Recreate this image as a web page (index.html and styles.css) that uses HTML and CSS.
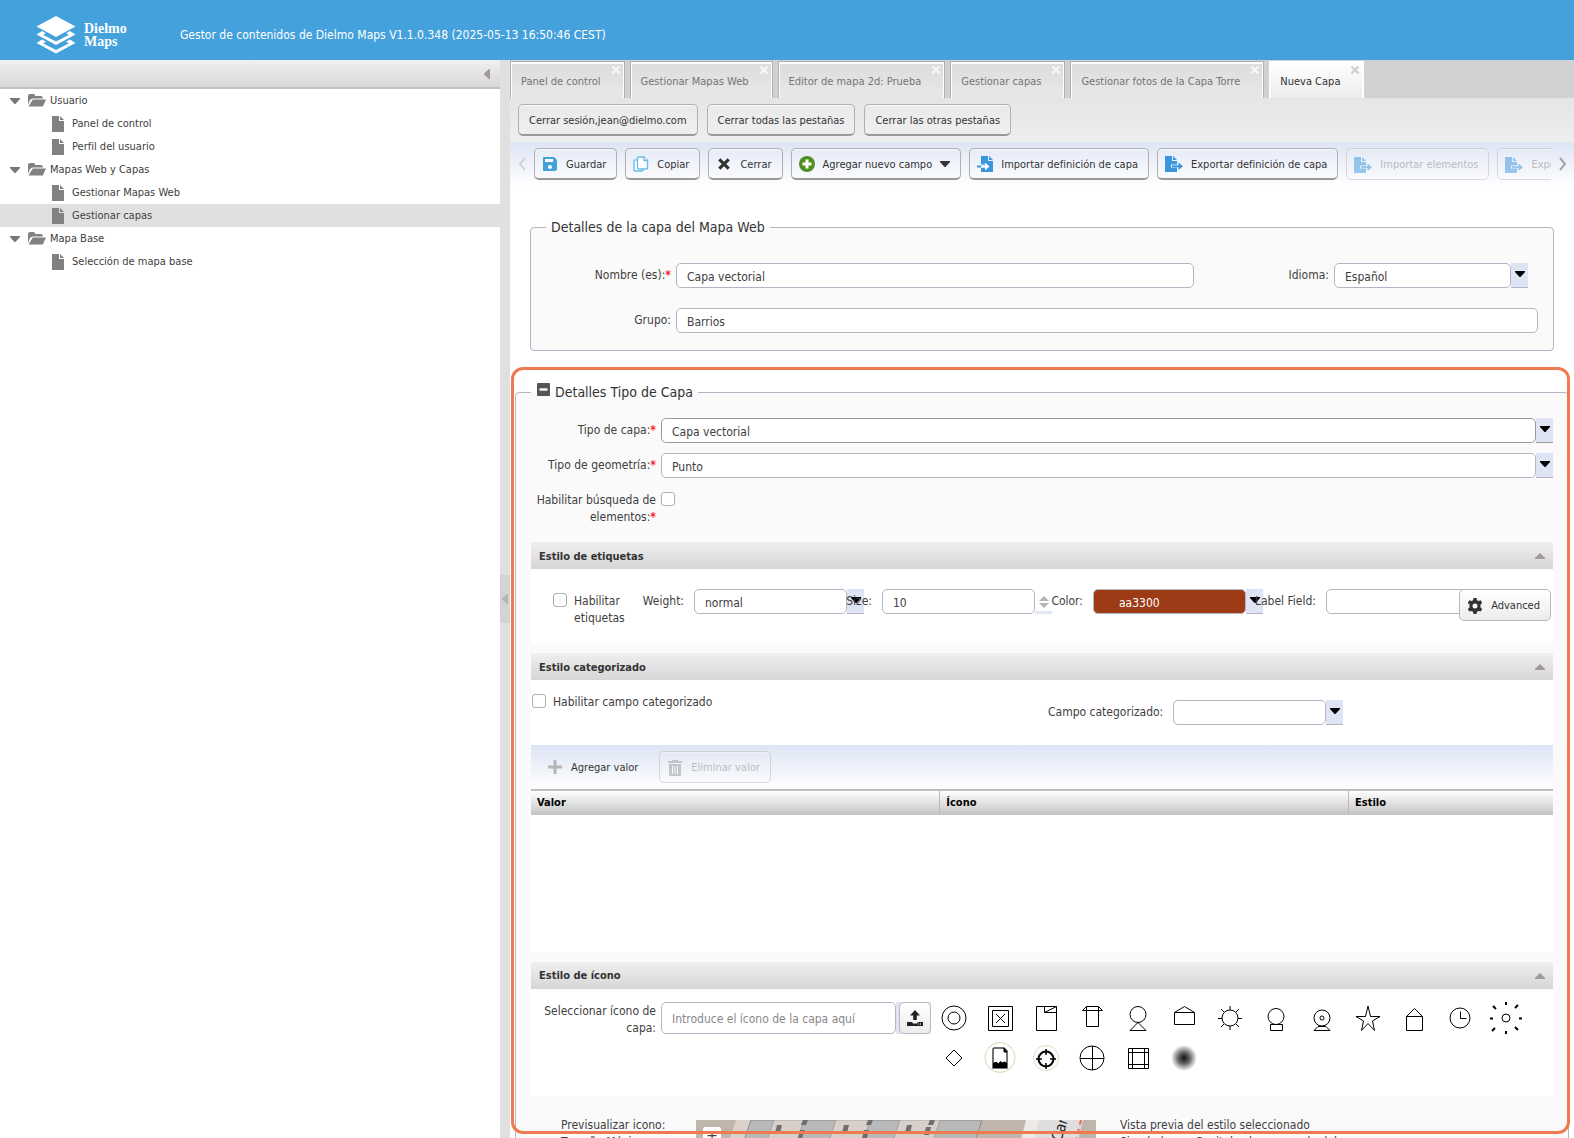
FILE: index.html
```html
<!DOCTYPE html>
<html lang="es">

<head>
    <meta charset="utf-8">
    <title>Dielmo Maps</title>
    <link rel="stylesheet" href="styles.css">
</head>

<body>
    <!-- shared shapes -->
    <svg class="defs" width="0" height="0" aria-hidden="true">
        <symbol id="folder" viewBox="0 0 18 13">
            <path d="M0 11V2q0-2 2-2h3.500q1.500 0 1.800 2H13q2 0 2 2.500H5q-2 0-3 1.500z" fill="#818181" />
            <path d="M4.800 5.500H18l-3.200 7H.5z" fill="#818181" />
        </symbol>
        <symbol id="page" viewBox="0 0 12 16">
            <path d="M0 0h7v5h5v11H0zM8 0l4 4H8z" fill="#818181" />
        </symbol>
        <symbol id="down" viewBox="0 0 10 6">
            <path d="M0 0h10v1L5.500 6h-1L0 1z" fill="currentColor" />
        </symbol>
        <symbol id="up" viewBox="0 0 10 6">
            <path d="M0 6h10V5L5 0 0 5z" fill="#a39999" />
        </symbol>
        <symbol id="cross" viewBox="0 0 10 10">
            <path d="M1.500 1.500l7 7M8.500 1.500l-7 7" stroke="currentColor" stroke-width="2.400" />
        </symbol>
        <symbol id="export" viewBox="0 0 18 16">
            <path d="M0 0h7v5h5v3.500H6v3h6V16H0zM8 0l4 4H8z" fill="#3c96dd" />
            <path d="M7 9.200h6.500V6.500L18 10.200l-4.500 3.700v-2.700H7z" fill="#3c96dd" />
        </symbol>
    </svg>

    <header class="header">
        <div class="logo">
            <svg width="40" height="38" viewBox="0 0 40 38">
                <path d="M20 0l19.500 10.500L20 21 .5 10.500z" fill="#fff" />
                <path d="M6 15L.5 18.500 20 29l19.500-10.500L34 15l-4 2.200 3 1.500L20 25.500 7 18.700l3-1.500z" fill="#fff" />
                <path d="M6 23.500L.5 27 20 37.500 39.500 27 34 23.500l-4 2.200 3 1.500L20 34 7 27.200l3-1.500z" fill="#fff" />
            </svg>
            <span>Dielmo<br>Maps</span>
        </div>
        <p class="version">Gestor de contenidos de Dielmo Maps V1.1.0.348 (2025-05-13 16:50:46 CEST)</p>
    </header>

    <div class="layout">
        <nav class="sidebar">
            <div class="sidebar-head">
                <svg width="6" height="10" viewBox="0 0 6 10"><path d="M6 0v10L5 10 0 5.500v-1L5 0z" fill="#a39999" /></svg>
            </div>
            <ul class="tree">
                <li class="folder"><svg class="caret" width="10" height="6"><use href="#down" /></svg><svg width="18" height="13"><use href="#folder" /></svg>Usuario</li>
                <li class="leaf"><svg width="12" height="16"><use href="#page" /></svg><a href="#">Panel de control</a></li>
                <li class="leaf"><svg width="12" height="16"><use href="#page" /></svg><a href="#">Perfil del usuario</a></li>
                <li class="folder"><svg class="caret" width="10" height="6"><use href="#down" /></svg><svg width="18" height="13"><use href="#folder" /></svg>Mapas Web y Capas</li>
                <li class="leaf"><svg width="12" height="16"><use href="#page" /></svg><a href="#">Gestionar Mapas Web</a></li>
                <li class="leaf selected"><svg width="12" height="16"><use href="#page" /></svg><a href="#">Gestionar capas</a></li>
                <li class="folder"><svg class="caret" width="10" height="6"><use href="#down" /></svg><svg width="18" height="13"><use href="#folder" /></svg>Mapa Base</li>
                <li class="leaf"><svg width="12" height="16"><use href="#page" /></svg><a href="#">Selección de mapa base</a></li>
            </ul>
        </nav>

        <div class="splitter">
            <div class="handle"><svg width="6" height="10" viewBox="0 0 6 10"><path d="M6 0v10L5 10 0 5.500v-1L5 0z" fill="#b5b5b5" /></svg></div>
        </div>

        <main class="main">
            <div class="tabs">
                <button class="tab">Panel de control<svg class="close" width="10" height="10"><use href="#cross" /></svg></button>
                <button class="tab">Gestionar Mapas Web<svg class="close" width="10" height="10"><use href="#cross" /></svg></button>
                <button class="tab">Editor de mapa 2d: Prueba<svg class="close" width="10" height="10"><use href="#cross" /></svg></button>
                <button class="tab">Gestionar capas<svg class="close" width="10" height="10"><use href="#cross" /></svg></button>
                <button class="tab">Gestionar fotos de la Capa Torre<svg class="close" width="10" height="10"><use href="#cross" /></svg></button>
                <button class="tab active">Nueva Capa<svg class="close" width="10" height="10"><use href="#cross" /></svg></button>
            </div>

            <div class="session">
                <button class="btn">Cerrar sesión,jean@dielmo.com</button>
                <button class="btn">Cerrar todas las pestañas</button>
                <button class="btn">Cerrar las otras pestañas</button>
            </div>

            <div class="toolbar">
                <svg class="scroll" width="8" height="14" viewBox="0 0 8 14"><path d="M7 1L2 7l5 6" fill="none" stroke="#d3d3d3" stroke-width="2" /></svg>
                <div class="tools">
                    <button class="btn icon">
                        <svg width="16" height="16" viewBox="0 0 16 16"><path d="M2 1h10l3 3v9q0 2-2 2H2q-1 0-1-1V2q0-1 1-1z" fill="#44a1db" /><path d="M3 3h8v3H3z" fill="#fff" /><circle cx="8" cy="11" r="2" fill="#fff" /></svg>
                        Guardar</button>
                    <button class="btn icon">
                        <svg width="16" height="16" viewBox="0 0 16 16" fill="#fff" stroke="#6cbce8" stroke-width="1.400"><path d="M3.500 4H2Q1 4 1 5v9q0 1 1 1h7q1 0 1-1v-1" /><path d="M5.500 1H11l3.500 3.500V12q0 1-1 1h-8q-1 0-1-1V2q0-1 1-1z" /><path d="M11 1v3.500h3.500" /></svg>
                        Copiar</button>
                    <button class="btn icon"><svg width="16" height="16" viewBox="-1 -1 12 12"><use href="#cross" width="10" height="10" /></svg>Cerrar</button>
                    <button class="btn icon">
                        <svg width="16" height="16" viewBox="0 0 16 16"><circle cx="8" cy="8" r="8" fill="#4f8f22" /><path d="M8 3.500v9M3.500 8h9" stroke="#fff" stroke-width="3" /></svg>
                        Agregar nuevo campo
                        <svg class="menu" width="10" height="6"><use href="#down" /></svg></button>
                    <button class="btn icon">
                        <svg width="16" height="16" viewBox="0 0 16 16"><path d="M4 0h7v5h5v11H4v-4h4v2.500l4.500-4L8 6.500v2H4zM12 0l4 4h-4z" fill="#3c96dd" /><path d="M0 9.500h9v2H0z" fill="#3c96dd" /><path d="M4 9.500h4.500V7.500l3.500 3-3.500 3v-2H4z" fill="#fff" /></svg>
                        Importar definición de capa</button>
                    <button class="btn icon"><svg width="18" height="16"><use href="#export" /></svg>Exportar definición de capa</button>
                    <button class="btn icon" disabled><svg width="18" height="16"><use href="#export" /></svg>Importar elementos</button>
                    <button class="btn icon" disabled><svg width="18" height="16"><use href="#export" /></svg>Exportar elementos</button>
                </div>
                <svg class="scroll" width="8" height="14" viewBox="0 0 8 14"><path d="M1 1l5 6-5 6" fill="none" stroke="#a5a5a5" stroke-width="2" /></svg>
            </div>

            <form class="content">
                <fieldset class="box map-box">
                    <legend>Detalles de la capa del Mapa Web</legend>
                    <div class="row">
                        <label class="label wide" for="nombre">Nombre (es):<b>*</b></label>
                        <input class="field nombre" id="nombre" type="text" value="Capa vectorial">
                        <label class="label idioma" for="idioma">Idioma:</label>
                        <span class="combo idioma-combo">
                            <select class="field" id="idioma"><option>Español</option></select>
                            <span class="trigger"><svg width="10" height="6"><use href="#down" /></svg></span>
                        </span>
                    </div>
                    <div class="row">
                        <label class="label wide" for="grupo">Grupo:</label>
                        <input class="field grow" id="grupo" type="text" value="Barrios">
                    </div>
                </fieldset>

                <fieldset class="box type-box">
                    <legend><svg width="13" height="13" viewBox="0 0 13 13"><rect width="13" height="13" rx="1" fill="#555" /><path d="M2.500 6.500h8" stroke="#fff" stroke-width="2.400" /></svg>Detalles Tipo de Capa</legend>
                    <div class="row">
                        <label class="label" for="tipo">Tipo de capa:<b>*</b></label>
                        <span class="combo grow focus">
                            <select class="field" id="tipo"><option>Capa vectorial</option></select>
                            <span class="trigger"><svg width="10" height="6"><use href="#down" /></svg></span>
                        </span>
                    </div>
                    <div class="row">
                        <label class="label" for="geometria">Tipo de geometría:<b>*</b></label>
                        <span class="combo grow">
                            <select class="field" id="geometria"><option>Punto</option></select>
                            <span class="trigger"><svg width="10" height="6"><use href="#down" /></svg></span>
                        </span>
                    </div>
                    <div class="row search-row">
                        <label class="label" for="busqueda">Habilitar búsqueda de elementos:<b>*</b></label>
                        <input class="check" id="busqueda" type="checkbox">
                    </div>

                    <section class="panel">
                        <h2>Estilo de etiquetas<svg width="10" height="6"><use href="#up" /></svg></h2>
                        <div class="tag-style">
                            <div class="tag-check">
                                <input class="check" id="etiquetas" type="checkbox">
                                <label for="etiquetas">Habilitar etiquetas</label>
                            </div>
                            <div class="cell weight-cell">
                                <label for="weight">Weight:</label>
                                <span class="combo over">
                                    <select class="field" id="weight"><option>normal</option></select>
                                    <span class="trigger"><svg width="10" height="6"><use href="#down" /></svg></span>
                                </span>
                            </div>
                            <div class="cell size-cell">
                                <label for="size">Size:</label>
                                <span class="combo over">
                                    <input class="field" id="size" type="text" value="10">
                                    <span class="trigger spin"><svg width="10" height="12" viewBox="0 0 10 12"><path d="M5 0l5 5H0zM5 12l5-5H0z" fill="#b4b4b4" /></svg></span>
                                </span>
                            </div>
                            <div class="cell color-cell">
                                <label for="color">Color:</label>
                                <span class="combo over">
                                    <input class="field color" id="color" type="text" value="aa3300">
                                    <span class="trigger"><svg width="10" height="6"><use href="#down" /></svg></span>
                                </span>
                            </div>
                            <div class="cell field-cell">
                                <label for="labelfield">Label Field:</label>
                                <input class="field" id="labelfield" type="text">
                            </div>
                            <button class="btn icon advanced" type="button">
                                <svg width="16" height="16" viewBox="0 0 16 16"><path fill-rule="evenodd" d="M6.500 0h3l.5 2.200 1.500.8 2.200-.7 1.500 2.600-1.700 1.600v2.900l1.700 1.600-1.500 2.600-2.200-.7-1.500.8-.5 2.300h-3L6 13.700l-1.500-.8-2.200.7L.8 11l1.700-1.600V6.500L.8 4.900l1.500-2.600 2.200.7L6 2.200zM8 5.500a2.500 2.500 0 1 0 0 5 2.500 2.500 0 0 0 0-5z" fill="#333" /></svg>
                                Advanced</button>
                        </div>
                    </section>

                    <section class="panel">
                        <h2>Estilo categorizado<svg width="10" height="6"><use href="#up" /></svg></h2>
                        <div class="category">
                            <div class="category-check">
                                <input class="check" id="categorizado" type="checkbox">
                                <label for="categorizado">Habilitar campo categorizado</label>
                            </div>
                            <div class="cell category-field">
                                <label for="campo">Campo categorizado:</label>
                                <span class="combo">
                                    <select class="field" id="campo"><option></option></select>
                                    <span class="trigger"><svg width="10" height="6"><use href="#down" /></svg></span>
                                </span>
                            </div>
                        </div>
                        <div class="values-bar">
                            <button class="btn icon flat" type="button"><svg width="16" height="16" viewBox="0 0 16 16"><path d="M8 1v14M1 8h14" stroke="#b5b5b5" stroke-width="3" /></svg>Agregar valor</button>
                            <button class="btn icon" type="button" disabled><svg width="16" height="16" viewBox="0 0 16 16"><path d="M1 1h4V0h6v1h4v2H1zM2 4h12v12H2z" fill="#999" /><path d="M5.500 6v8M8 6v8M10.500 6v8" stroke="#fff" /></svg>Eliminar valor</button>
                        </div>
                        <table class="values">
                            <thead>
                                <tr><th>Valor</th><th>Ícono</th><th>Estilo</th></tr>
                            </thead>
                            <tbody>
                                <tr><td colspan="3"></td></tr>
                            </tbody>
                        </table>
                    </section>

                    <section class="panel">
                        <h2>Estilo de ícono<svg width="10" height="6"><use href="#up" /></svg></h2>
                        <div class="icon-style">
                            <label class="label" for="icono">Seleccionar ícono de capa:</label>
                            <input class="field tall" id="icono" type="text" placeholder="Introduce el ícono de la capa aquí">
                            <span class="upload">
                                <button class="btn" type="button" aria-label="Subir"><svg width="16" height="16" viewBox="0 0 16 16"><path d="M8 0l5 5.500H9.800V10H6.200V5.500H3zM0 12h5l1 1.500h4L11 12h5v4H0z" fill="#222" /><path d="M11 14h1M13 14h1" stroke="#fff" /></svg></button>
                            </span>
                            <div class="icons">
                                <svg viewBox="0 0 32 32"><circle cx="16" cy="16" r="12" /><circle cx="16" cy="16" r="6" /></svg>
                                <svg viewBox="0 0 32 32"><path d="M4.500 4.500h24v24h-24zM8.500 8.500h16v16h-16zM12 12l9 9M21 12l-9 9" /></svg>
                                <svg viewBox="0 0 32 32"><path d="M6.500 4.500h20v24h-20zM14.500 4.500v6h12M14.500 10.500l12-6" /></svg>
                                <svg viewBox="0 0 32 32"><path d="M10.500 4.500h12v20h-12zM10.500 4.500l-4 4h20l-4-4" /></svg>
                                <svg viewBox="0 0 32 32"><circle cx="16" cy="12.500" r="8" /><path d="M16 20.500l-8 8h16z" /></svg>
                                <svg viewBox="0 0 32 32"><path d="M6.500 10.500h20v12h-20zM6.500 10.500l10-6 10 6" /></svg>
                                <svg viewBox="0 0 32 32"><circle cx="16" cy="16" r="8" /><path d="M16 4v4M16 24v4M4 16.500h4M24 16.500h4M7 7l3 3M25 7l-3 3M7 25l3-3M25 25l-3-3" /></svg>
                                <svg viewBox="0 0 32 32"><circle cx="16" cy="14.500" r="8" /><path d="M10.500 22.500h12v6h-12z" /></svg>
                                <svg viewBox="0 0 32 32"><circle cx="16" cy="16" r="8" /><circle cx="16" cy="16" r="2" /><path d="M12 24.500l-4 4h16l-4-4z" /></svg>
                                <svg viewBox="0 0 32 32"><path d="M16 4l2.500 10.500h9.500L20.500 19l2 9.500-6.500-7-6.500 7 2-9.500L4 14.500h9.500z" /></svg>
                                <svg viewBox="0 0 32 32"><path d="M8.500 14.500h16v14h-16zM8.500 14.500l8-8 8 8" /></svg>
                                <svg viewBox="0 0 32 32"><circle cx="16" cy="16" r="10" /><path d="M16.500 9.500v7h6" /></svg>
                                <svg viewBox="0 0 32 32"><circle cx="16" cy="16" r="4" /><path stroke-width="2" d="M16 0v3M16 29v3M0 16.500h3M29 16.500h3M3 4l3 3M28 3l-3 3M2 29l3-3M28 28l-3-3" /></svg>
                                <svg viewBox="0 0 32 32"><path d="M16 8l8 8-8 8-8-8z" /></svg>
                                <svg viewBox="0 0 32 32"><circle cx="16" cy="15.500" r="15" stroke="#d3dab0" /><path stroke-width="1.500" stroke="#444" d="M10 6h10l3 3v17H9V7z" /><path d="M20 6v4h3z" fill="#222" /><path fill="#000" d="M9.500 21q3-2 5 1 2-4 4-1 2-2 4 0v4.500h-13z" /></svg>
                                <svg viewBox="0 0 32 32"><circle cx="16" cy="16" r="12.500" stroke="#dde0bf" /><circle cx="16" cy="17" r="7.500" stroke-width="2" /><path stroke-width="1.500" d="M16 7v6M16 21v6M6 17h6M20 17h6" /></svg>
                                <svg viewBox="0 0 32 32"><circle cx="16" cy="16" r="12" /><path d="M16.500 4v24M4 16.500h24" /></svg>
                                <svg viewBox="0 0 32 32"><path d="M6.500 6.500h20v20h-20zM10.500 6.500v20M22.500 6.500v20M6.500 10.500h20M6.500 22.500h20" /></svg>
                                <svg viewBox="0 0 32 32"><defs><radialGradient id="spot"><stop offset="0" stop-color="#111" /><stop offset=".45" stop-color="#666" /><stop offset="1" stop-color="#fff" /></radialGradient></defs><circle cx="16" cy="16" r="13" fill="url(#spot)" stroke="none" /></svg>
                            </div>
                        </div>
                    </section>

                    <div class="preview">
                        <div class="preview-label">Previsualizar icono:<br>Tamaño Máximo:</div>
                        <div class="map">
                            <svg width="400" height="60" viewBox="0 0 400 60">
                                <rect width="400" height="60" fill="#c0b5aa" />
                                <path d="M40 0h15L35 60H20z" fill="#dad1cb" />
                                <path d="M55 0h23L58 60H35zM108 0h32l-20 60H88zM174 0h30l-20 60h-30zM244 0h42l-20 60h-42z" fill="#b8b9b9" stroke="#8d8d8d" />
                                <path d="M78 0h30L88 60H58zM140 0h34l-20 60h-34zM204 0h40l-20 60h-40z" fill="#d8cfc9" stroke="#aaa" />
                                <path d="M81 5h5l-2 8h-5zM107 0h5l-2 5h-5zM104 10h5l-3 8h-4zM148 5h5l-2 8h-5zM172 0h5l-2 5h-5zM168 10h5l-2 8h-5zM211 5h5l-2 8h-5zM234 0h5l-2 5h-5zM230 7h5l-2 8h-5z" fill="#6e6e6e" />
                                <path d="M330 0h45l-15 60h-45z" fill="#eceae7" />
                                <path d="M343 0h44l-15 60h-44z" fill="#dedede" />
                                <path d="M385 0l-15 60" stroke="#f26b5e" stroke-width="2" stroke-dasharray="5 4" />
                                <text x="365" y="22" transform="rotate(-72 365 22)" font-size="15" fill="#222">Car</text>
                            </svg>
                            <button class="zoom-in" type="button">+</button>
                        </div>
                        <div>Vista previa del estilo seleccionado<br>Simulador en Capital color mapeado del</div>
                    </div>
                </fieldset>
                <div class="highlight"></div>
            </form>
        </main>
    </div>
</body>

</html>
```
FILE: styles.css
```css
* {
    box-sizing: border-box;
}

body {
    margin: 0;
    height: 100vh;
    display: flex;
    flex-direction: column;
    overflow: hidden;
    background: #fff;
    color: #404040;
    font: 12px/17px Tahoma, "DejaVu Sans Condensed", "DejaVu Sans", sans-serif;
}

button,
input,
select {
    font: inherit;
    color: inherit;
    margin: 0;
}

svg {
    display: block;
    flex: none;
}

.defs {
    position: absolute;
}

.header {
    flex: none;
    height: 60px;
    display: flex;
    align-items: center;
    padding: 10px 36px 0;
    background: #44a1dc;
    color: #fff;
}

.logo {
    display: flex;
    align-items: center;
    gap: 8px;
    width: 144px;
    font: bold 14px/13px "Liberation Serif", serif;
}

.version {
    margin: 0;
}

.layout {
    flex: 1;
    min-height: 0;
    display: flex;
}

/* left tree */
.sidebar {
    flex: none;
    width: 500px;
    font-size: 11px;
}

.sidebar-head {
    height: 29px;
    display: flex;
    align-items: center;
    justify-content: flex-end;
    padding-right: 10px;
    border-bottom: 2px solid #c1c1c1;
    background: linear-gradient(#f0f0f0, #d7d7d7);
}

.tree {
    list-style: none;
    margin: 0;
    padding: 0;
}

.tree li {
    height: 23px;
    display: flex;
    align-items: center;
}

.tree a {
    color: inherit;
    text-decoration: none;
}

.folder {
    gap: 4px;
    padding-left: 10px;
}

.folder .caret {
    margin-right: 4px;
    color: #777;
}

.leaf {
    gap: 8px;
    padding-left: 52px;
}

.selected {
    background: #e0e0e0;
}

.splitter {
    flex: none;
    width: 10px;
    display: flex;
    align-items: center;
    background: #e0e0e0;
}

.handle {
    width: 10px;
    height: 48px;
    display: flex;
    align-items: center;
    justify-content: center;
    background: #d3d3d3;
}

/* tabs and toolbars */
.main {
    flex: 1;
    min-width: 0;
    display: flex;
    flex-direction: column;
    font-size: 12px;
}

.tabs {
    flex: none;
    height: 38px;
    display: flex;
    gap: 5px;
    padding-top: 1px;
    background: #d1d1d1;
}

.tab {
    position: relative;
    padding: 2px 23px 0 10px;
    border: 1px solid #b0b0b0;
    border-bottom: 0;
    box-shadow: inset 0 2px #fff, inset 1px 0 #fff, inset -1px 0 #fff;
    background: linear-gradient(#dcdcdc, #e8e8e8);
    color: #757575;
    font-size: 11px;
    white-space: nowrap;
}

.tab.active {
    border-color: #fff;
    background: linear-gradient(#fff, #ececec);
    color: #333;
}

.close {
    position: absolute;
    top: 3px;
    right: 3px;
    color: #f8f8f8;
}

.active .close {
    color: #d0d0d0;
}

.session {
    flex: none;
    height: 44px;
    display: flex;
    gap: 9px;
    padding: 6px 8px;
    background: linear-gradient(#e5e5e5, #eee);
}

.btn {
    height: 32px;
    padding: 1px 10px 0;
    border: 1px solid #b0b0b0;
    border-bottom: 2px solid #999;
    border-radius: 5px;
    background: rgba(255, 255, 255, .15);
    box-shadow: inset 0 1px rgba(255, 255, 255, .8);
    color: #333;
    font-size: 11px;
    white-space: nowrap;
}

.btn.icon {
    display: flex;
    flex: none;
    align-items: center;
    gap: 8px;
    padding: 1px 10px 0 7px;
}

.btn:disabled {
    opacity: .5;
    border: 1px solid #bbb;
    color: #888;
}

.toolbar {
    flex: none;
    height: 44px;
    display: flex;
    align-items: center;
    padding: 0 7px 0 8px;
    background: linear-gradient(#dde4f4, #fff);
}

.tools {
    flex: 1;
    min-width: 0;
    display: flex;
    gap: 8px;
    margin: 0 8px;
    overflow: hidden;
}

/* form */
.content {
    position: relative;
    flex: 1;
    min-height: 0;
    overflow: hidden;
    padding: 32px 5px 0;
}

.box {
    min-width: 0;
    margin: 0;
    border: 1px solid #b4b4c5;
    border-radius: 4px;
    background: #fafafa;
}

.box legend {
    display: flex;
    align-items: flex-start;
    gap: 5px;
    margin: 0;
    padding: 0 5px;
    color: #333;
    font-size: 14px;
    line-height: 19px;
}

.map-box {
    margin: 0 15px 32px;
    padding: 26px 15px 17px 11px;
}

.map-box legend {
    margin-left: 4px;
}

.type-box {
    padding: 16px 15px 60px;
}

.type-box legend {
    padding-left: 6px;
}

.row {
    display: flex;
    align-items: flex-start;
}

.map-box .row + .row {
    margin-top: 20px;
}

.type-box .row {
    margin-bottom: 10px;
}

.label {
    flex: none;
    width: 130px;
    padding: 4px 5px 0 0;
    text-align: right;
}

.label b {
    color: #f22;
}

.label.wide {
    width: 134px;
}

.grow {
    flex: 1;
}

.field {
    height: 25px;
    min-width: 0;
    padding: 2px 10px 0;
    border: 1px solid #b4b4c5;
    border-radius: 5px;
    background: #fff;
    appearance: none;
    outline: 0;
}

select.field {
    padding-top: 4px;
}

.field::placeholder {
    color: #888;
}

.nombre {
    flex: 1;
}

.idioma {
    width: 140px;
}

.idioma-combo {
    width: 194px;
    margin-right: 10px;
}

.map-box .row .label.wide {
    margin-left: 0;
}

.combo {
    display: flex;
}

.combo .field {
    flex: 1;
}

.combo.focus .field,
.combo.focus .trigger {
    border-color: #999;
}

.trigger {
    width: 17px;
    height: 25px;
    padding: 8px 0 0 4px;
    border-bottom: 1px solid #b4b4c5;
    background: #dfe4f4;
    color: #000;
}

.check {
    flex: none;
    width: 14px;
    height: 14px;
    border: 1px solid #b0b0b0;
    border-radius: 3px;
    background: #fff;
    appearance: none;
}

.search-row {
    height: 54px;
    padding-top: 4px;
}

.search-row .label {
    padding-top: 0;
}

.type-box .search-row {
    margin-bottom: 0;
}

/* collapsible panels */
.panel {
    margin-bottom: 10px;
    background: #fff;
}

.panel h2 {
    height: 27px;
    display: flex;
    align-items: center;
    justify-content: space-between;
    margin: 0;
    padding: 1px 8px 0;
    background: linear-gradient(#efefef, #d6d6d6);
    color: #333;
    font-size: 11px;
}

.tag-style {
    display: flex;
    align-items: flex-start;
    height: 74px;
    padding: 20px 2px 0 22px;
}

.tag-check {
    display: flex;
    gap: 7px;
    width: 90px;
    padding-top: 4px;
}

.cell {
    flex: none;
    display: flex;
    justify-content: flex-end;
    gap: 10px;
}

.cell label {
    padding-top: 4px;
}

.cell .combo,
.cell .field {
    flex: none;
    width: 170px;
}

.cell .combo.over,
.cell > .field {
    width: 153px;
}

.cell .combo .field {
    width: 153px;
}

.weight-cell {
    width: 204px;
}

.size-cell {
    width: 188px;
}

.color-cell {
    width: 211px;
}

.field-cell {
    width: 233px;
}

/* the label of the next cell reaches over the trigger */
.size-cell label,
.field-cell label {
    position: relative;
    z-index: 1;
}

.trigger.spin {
    flex: none;
    padding-top: 7px;
    border-bottom: 3px solid #e3e8f5;
    background: none;
}

.over .trigger {
    flex: none;
}

.cell .field.color {
    padding-left: 25px;
    background: #9d3b17;
    color: #fff;
}

.advanced.btn {
    position: relative;
    margin-left: auto;
    border: 1px solid #b9b9c0;
    background: linear-gradient(#fff, #ececec);
}

.tag-style .field-cell {
    margin-right: -24px;
}

.category {
    height: 65px;
    display: flex;
    align-items: flex-start;
}

.category-check {
    flex: 1;
    display: flex;
    gap: 7px;
    padding: 14px 0 0 1px;
}

.category-field {
    flex: 1;
    justify-content: flex-start;
    padding: 20px 0 0 11px;
}

.values-bar {
    height: 44px;
    display: flex;
    align-items: center;
    gap: 10px;
    padding: 0 8px;
    background: linear-gradient(#dde4f4, #fff);
}

.btn.flat {
    border-color: transparent;
    background: none;
    box-shadow: none;
}

.values {
    width: 100%;
    border-collapse: collapse;
    table-layout: fixed;
}

.values thead {
    border-top: 1px solid #b9b9b9;
    background: linear-gradient(#fff, #c4c4c4);
}

.values th {
    width: 40%;
    height: 25px;
    padding: 0 6px;
    border-left: 1px solid #bbb;
    color: #000;
    font-size: 11px;
    text-align: left;
}

.values th:first-child {
    border-left: 0;
}

.values th:last-child {
    width: 20%;
}

.values td {
    height: 137px;
    padding: 0;
}

.icon-style {
    display: flex;
    align-items: flex-start;
    height: 107px;
    padding-top: 13px;
}

.icon-style .label {
    padding: 1px 5px 0 10px;
}

.tall {
    width: 235px;
    height: 32px;
}

.upload {
    height: 32px;
    padding-left: 3px;
    background: #dfe4f4;
}

.upload .btn {
    width: 32px;
    padding: 0 7px;
    border: 1px solid #b9b9c0;
    background: linear-gradient(#fff, #ececec);
}

.icons {
    flex: 1;
    display: grid;
    grid-template-columns: repeat(auto-fill, 46px);
    grid-auto-rows: 40px;
    justify-items: center;
}

.icons svg {
    width: 32px;
    height: 32px;
    fill: none;
    stroke: #000;
    stroke-width: 1;
}

.preview {
    display: flex;
    gap: 24px;
    padding: 11px 0 0 30px;
}

.preview-label {
    width: 111px;
    white-space: nowrap;
}

.map {
    position: relative;
    margin-top: 3px;
}

.zoom-in {
    position: absolute;
    top: 7px;
    left: 7px;
    width: 18px;
    height: 18px;
    padding: 0;
    border: 0;
    border-radius: 2px;
    background: #fff;
    font-size: 16px;
}

/* orange callout over the layer type section */
.highlight {
    position: absolute;
    top: 181px;
    right: 4px;
    bottom: 4px;
    left: 1px;
    border: 3px solid #ee7b50;
    border-radius: 12px;
    pointer-events: none;
}
```
